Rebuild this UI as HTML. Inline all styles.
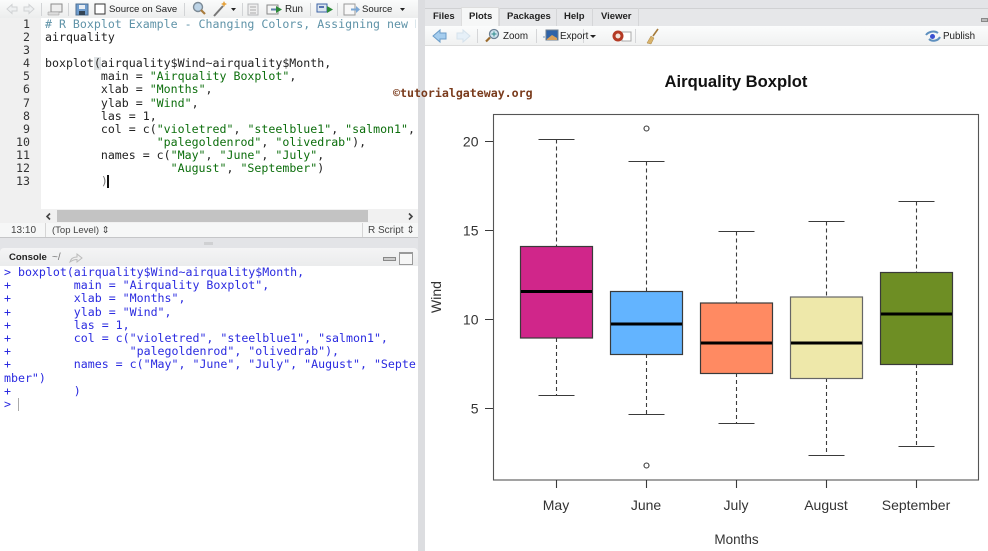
<!DOCTYPE html>
<html><head><meta charset="utf-8">
<style>
html,body{margin:0;padding:0;background:#fff}
#r{position:relative;width:988px;height:551px;overflow:hidden;background:#e3e4e7;font-family:"Liberation Sans",sans-serif;filter:blur(.3px)}
.a{position:absolute}
.code{font-family:"DejaVu Sans Mono","Liberation Mono",monospace;font-size:11.6px;line-height:13.1px;white-space:pre;position:absolute}
.t{position:absolute;font-size:10px;color:#222;white-space:nowrap}
.g{color:#0c6e0c}.k{color:#222}.c{color:#5f93a8}
</style></head><body>
<div id="r">
<!-- left top toolbar -->
<div class="a" style="left:0;top:0;width:418px;height:18px;background:linear-gradient(#fafbfb,#eceded)"></div>
<svg class="a" style="left:0;top:0" width="418" height="18">
<g stroke="#d0d2d4" fill="#eef0f1"><path d="M7 9l5-4.500v2.500h5v4h-5v2.500z"/><path d="M34 9l-5-4.500v2.500h-5v4h5v2.500z"/></g>
<g stroke="#d2d4d6"><path d="M41.500 3v13M68.500 3v13M184.500 3v13M242.500 3v13M310.500 3v13M337.500 3v13"/></g>
<rect x="51" y="4" width="11" height="8" fill="#eee" stroke="#8b8b8b"/><path d="M48 12h11v3h-11z" fill="#ddd" stroke="#999" stroke-width=".5"/>
<rect x="76" y="4" width="12" height="11" fill="#6e9ccd" stroke="#4f6f92"/><rect x="79" y="5" width="6" height="4" fill="#e8eef4"/><rect x="79" y="11" width="6" height="4" fill="#345"/>
<rect x="95" y="4" width="10" height="10" fill="#fff" stroke="#333"/>
<circle cx="198" cy="7" r="4.500" fill="#bcd3e6" stroke="#7c8a96" stroke-width="1.400"/><path d="M201 10l4 4" stroke="#a87b3c" stroke-width="2.200"/>
<path d="M214 16l9-10" stroke="#777" stroke-width="2"/><path d="M224 1l1 2 2 1-2 1-1 2-1-2-2-1 2-1z" fill="#e6a23c"/>
<path d="M231 8h5l-2.500 3z" fill="#222"/>
<rect x="248" y="4" width="10" height="11" fill="#eee" stroke="#b5b7b9"/><path d="M250 7h6M250 10h6M250 13h6" stroke="#aaa"/>
<rect x="267" y="5" width="11" height="9" fill="#f5f5f5" stroke="#888"/><path d="M271 9.500h5" stroke="#5a7fa8" stroke-width="2"/><path d="M276 6l6 3.500-6 3.500z" fill="#2c8a38"/>
<rect x="317" y="4" width="10" height="8" fill="#dbe6ef" stroke="#3e63a5"/><path d="M319 7h5" stroke="#2b4d9c" stroke-width="1.500"/><path d="M327 6l6 3.500-6 3.500z" fill="#2c8a38"/>
<rect x="344" y="4" width="11" height="11" fill="#f8f8f8" stroke="#999"/><path d="M351 9.500h5" stroke="#7ca7d4" stroke-width="2"/><path d="M356 6l4 3.500-4 3.500z" fill="#7ca7d4"/>
<path d="M400 8h5l-2.500 3z" fill="#222"/>
</svg>
<div class="t" style="left:109px;top:3.500px;font-size:9.600px">Source on Save</div>
<div class="t" style="left:285px;top:3.500px;font-size:9.800px">Run</div>
<div class="t" style="left:362px;top:3.500px;font-size:9.600px">Source</div>

<!-- editor -->
<div class="a" style="left:0;top:18px;width:418px;height:204px;background:#fff"></div>
<div class="a" style="left:0;top:18px;width:41px;height:205px;background:#f0f0f0"></div>
<div class="code" style="left:0;top:18px;width:30px;text-align:right;color:#333">1
2
3
4
5
6
7
8
9
10
11
12
13</div>
<div class="a" style="left:94px;top:57px;width:7px;height:13px;background:#dfe3e5"></div>
<div class="code k" style="left:45px;top:18px;width:371px;overflow:hidden"><span class="c"># R Boxplot Example - Changing Colors, Assigning new N</span>
airquality

boxplot(airquality$Wind~airquality$Month,
        main = <span class="g">"Airquality Boxplot"</span>,
        xlab = <span class="g">"Months"</span>,
        ylab = <span class="g">"Wind"</span>,
        las = 1,
        col = c(<span class="g">"violetred"</span>, <span class="g">"steelblue1"</span>, <span class="g">"salmon1"</span>,
                <span class="g">"palegoldenrod"</span>, <span class="g">"olivedrab"</span>),
        names = c(<span class="g">"May"</span>, <span class="g">"June"</span>, <span class="g">"July"</span>,
                  <span class="g">"August"</span>, <span class="g">"September"</span>)
        <span style="color:#777">)</span></div>
<div class="a" style="left:107px;top:175px;width:1.500px;height:13px;background:#111"></div>
<!-- h scrollbar -->
<div class="a" style="left:41px;top:209px;width:377px;height:14px;background:#f1f1f1"></div>
<div class="a" style="left:57px;top:210px;width:311px;height:12px;background:#c3c3c3"></div>
<svg class="a" style="left:41px;top:209px" width="377" height="14"><path d="M9 4.500l-3 3 3 3M368 4.500l3 3-3 3" fill="none" stroke="#444" stroke-width="1.600"/></svg>
<!-- status -->
<div class="a" style="left:0;top:223px;width:418px;height:14px;background:#f6f7f7;border-bottom:1px solid #c5c6c8"></div>
<div class="t" style="left:11px;top:225px;color:#444">13:10</div>
<div class="a" style="left:45px;top:223px;width:1px;height:14px;background:#d5d5d5"></div>
<div class="t" style="left:52px;top:225px;color:#444;font-size:9.500px">(Top Level) ⇕</div>
<div class="a" style="left:362px;top:223px;width:1px;height:14px;background:#d5d5d5"></div>
<div class="t" style="left:368px;top:225px;color:#444">R Script ⇕</div>

<!-- console header -->
<div class="a" style="left:0;top:248px;width:418px;height:19px;background:linear-gradient(#f4f4f5,#eaebec);border-radius:4px 4px 0 0"></div>
<div class="t" style="left:9px;top:252px;font-weight:bold;color:#222;font-size:9.600px">Console</div>
<div class="t" style="left:52px;top:252px;color:#777">~/</div>
<svg class="a" style="left:68px;top:252px" width="16" height="12"><path d="M2 10c1-4 4-5 7-5V2l5 4-5 4V7.500c-3 0-5 1-7 2.500z" fill="#eee" stroke="#bbb"/></svg>
<div class="a" style="left:383px;top:257px;width:13px;height:4px;background:#ccc;border:1px solid #888;box-sizing:border-box"></div>
<div class="a" style="left:399px;top:252px;width:12px;height:10px;background:#f6f6f6;border:1px solid #999;border-top-width:2px"></div>
<!-- console -->
<div class="a" style="left:0;top:266px;width:418px;height:285px;background:#fff"></div>
<div class="code" style="left:4px;top:266px;color:#2a2ae0;width:412px;overflow:hidden;line-height:13.2px">&gt; boxplot(airquality$Wind~airquality$Month,
+         main = "Airquality Boxplot",
+         xlab = "Months",
+         ylab = "Wind",
+         las = 1,
+         col = c("violetred", "steelblue1", "salmon1",
+                 "palegoldenrod", "olivedrab"),
+         names = c("May", "June", "July", "August", "Septe
mber")
+         )
&gt; </div>
<div class="a" style="left:18px;top:398px;width:1px;height:13px;background:#aaa"></div>
<!-- splitters -->
<div class="a" style="left:418px;top:0;width:7px;height:551px;background:#dcdde0"></div>
<div class="a" style="left:204px;top:242px;width:9px;height:3px;background:#cfd0d2"></div>

<!-- right tabs -->
<div class="a" style="left:425px;top:8px;width:563px;height:18px;background:#e6e7e9;border-top:1px solid #d0d1d3;box-sizing:border-box"></div>
<div class="a" style="left:461px;top:7px;width:38px;height:20px;background:#f6f7f7;border:1px solid #ddd;border-bottom:0;box-sizing:border-box"></div>
<div class="a" style="left:499px;top:8px;width:1px;height:18px;background:#d5d6d8"></div>
<div class="a" style="left:556px;top:8px;width:1px;height:18px;background:#d5d6d8"></div>
<div class="a" style="left:592px;top:8px;width:1px;height:18px;background:#d5d6d8"></div>
<div class="a" style="left:638px;top:8px;width:1px;height:18px;background:#d5d6d8"></div>
<div class="t" style="left:433px;top:10.500px;font-weight:bold;font-size:9.500px">Files</div>
<div class="t" style="left:469px;top:10.500px;font-weight:bold;font-size:9.500px">Plots</div>
<div class="t" style="left:507px;top:10.500px;font-weight:bold;font-size:9.500px">Packages</div>
<div class="t" style="left:564px;top:10.500px;font-weight:bold;font-size:9.500px">Help</div>
<div class="t" style="left:601px;top:10.500px;font-weight:bold;font-size:9.500px">Viewer</div>
<div class="a" style="left:981px;top:18px;width:7px;height:4px;background:#bbb;border:1px solid #888;box-sizing:border-box"></div>
<!-- right toolbar -->
<div class="a" style="left:425px;top:26px;width:563px;height:20px;background:linear-gradient(#fbfcfc,#f0f1f1);border-bottom:1px solid #dcdcdc;box-sizing:border-box"></div>
<svg class="a" style="left:425px;top:26px" width="563" height="20">
<path d="M8 10l7-6v3h6v6h-6v3z" fill="#a5cdee" stroke="#6a9cc8"/>
<path d="M45 10l-7-6v3h-6v6h6v3z" fill="#e6f0f8" stroke="#d5e2ec"/>
<path d="M52.500 3v14M111.500 3v14M158.500 3v14M210.500 3v14" stroke="#d5d6d8"/>
<circle cx="69" cy="8" r="4.500" fill="#cfe3ee" stroke="#6b8094" stroke-width="1.300"/><path d="M69 5.500v5M66.500 8h5" stroke="#2b8a8a"/><path d="M65 11.500l-4 4" stroke="#9a6a2c" stroke-width="2.200"/>
<rect x="121" y="4" width="12" height="10" fill="#2f63a8" stroke="#6e7f90"/><path d="M122 13l5-4 5 3v2h-10z" fill="#d8a05a"/><path d="M120 11h-2" stroke="#9db7d0" stroke-width="1.500"/>
<rect x="197" y="6" width="9" height="9" fill="#fff" stroke="#aaa"/>
<circle cx="193" cy="10" r="5.500" fill="#b43a24"/><circle cx="193" cy="10" r="2.500" fill="#f3e3d8"/>
<path d="M222 17l4-7 3 2-3 6z" fill="#d9b36a" stroke="#a98444" stroke-width=".5"/><path d="M228 10l5-7" stroke="#a57a3a" stroke-width="1.600"/>
<path d="M501 9c2-3 8-5 12-2" fill="none" stroke="#5d8fbe" stroke-width="2"/><path d="M515 11c-2 4-8 5-11 2" fill="none" stroke="#5d8fbe" stroke-width="2"/><circle cx="507.500" cy="10.500" r="2.500" fill="#3a4fd0"/>
</svg>
<div class="t" style="left:503px;top:31px;font-size:9.800px">Zoom</div>
<div class="t" style="left:560px;top:31px;font-size:9.800px">Export</div>
<svg class="a" style="left:590px;top:35px" width="7" height="4"><path d="M0 0h6l-3 3z" fill="#222"/></svg>
<div class="t" style="left:943px;top:31px;font-size:9.800px">Publish</div>

<!-- plot -->
<div class="a" style="left:425px;top:46px;width:563px;height:505px;background:#fff"></div>
<svg class="a" style="left:0;top:0" width="988" height="551">
<g fill="none" stroke="#3a3a3a" stroke-width="1.100">
<rect x="493.500" y="114.500" width="485" height="365.500" stroke="#555"/>
<path d="M493 141.500h-8M493 230.500h-8M493 319.500h-8M493 408.500h-8"/>
<path d="M556.500 480v8M646.500 480v8M736.500 480v8M826.500 480v8M916.500 480v8"/>
<path stroke-dasharray="4 3" d="M556.500 139.500V246M556.500 338V395.500M646.500 161.500V292M646.500 354V414.500M736.500 231.500V303M736.500 373V423.500M826.500 221.500V297M826.500 378V455.500M916.500 201.500V272M916.500 364V446.500"/>
<path d="M538.500 139.500h36M538.500 395.500h36M628.500 161.500h36M628.500 414.500h36M718.500 231.500h36M718.500 423.500h36M808.500 221.500h36M808.500 455.500h36M898.500 201.500h36M898.500 446.500h36"/>
<circle cx="646.500" cy="128.500" r="2.500"/><circle cx="646.500" cy="465.500" r="2.500"/>
</g>
<g stroke="#3a3a3a" stroke-width="1.200">
<rect x="520.500" y="246.500" width="72" height="91.500" fill="#d0268a"/>
<rect x="610.500" y="291.500" width="72" height="63" fill="#63b4ff"/>
<rect x="700.500" y="303" width="72" height="70.500" fill="#ff8a62"/>
<rect x="790.500" y="297" width="72" height="81.500" fill="#eee8aa" stroke="#666"/>
<rect x="880.500" y="272.500" width="72" height="92" fill="#6e8e24"/>
</g>
<g stroke="#000" stroke-width="3">
<path d="M521 291.500h71M611 324h71M701 343h71M791 343h71M881 314h71"/>
</g>
<g font-family="Liberation Sans,sans-serif" fill="#333" font-size="14">
<text x="478.500" y="146.500" text-anchor="end">20</text>
<text x="478.500" y="235.500" text-anchor="end">15</text>
<text x="478.500" y="324.500" text-anchor="end">10</text>
<text x="478.500" y="413.500" text-anchor="end">5</text>
<text x="556" y="510" text-anchor="middle">May</text>
<text x="646" y="510" text-anchor="middle">June</text>
<text x="736" y="510" text-anchor="middle">July</text>
<text x="826" y="510" text-anchor="middle">August</text>
<text x="916" y="510" text-anchor="middle">September</text>
<text x="736.500" y="544" text-anchor="middle" font-size="13.500">Months</text>
<text transform="translate(441 297) rotate(-90)" text-anchor="middle">Wind</text>
<text x="736" y="87" text-anchor="middle" font-weight="bold" font-size="16.600" fill="#111">Airquality Boxplot</text>
</g>
</svg>
<!-- watermark -->
<div class="a" style="left:393px;top:86px;font-family:'DejaVu Sans Mono','Liberation Mono',monospace;font-weight:bold;font-size:11.600px;color:#7a3b1c;white-space:nowrap">©tutorialgateway.org</div>
</div>
</body></html>
